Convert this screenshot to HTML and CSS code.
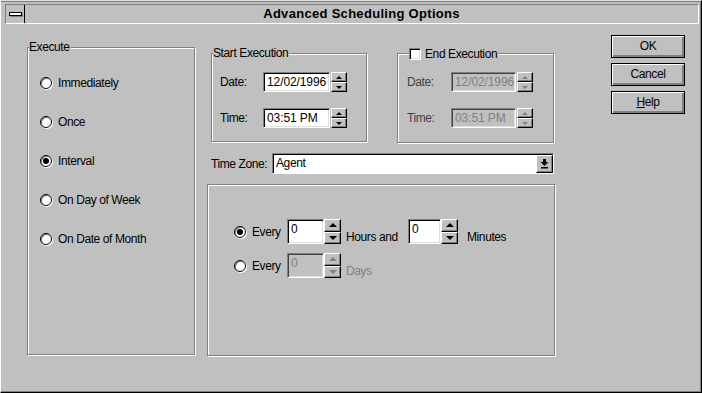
FILE: index.html
```html
<!DOCTYPE html>
<html lang="en">
<head>
  <meta charset="UTF-8" />
  <title>Advanced Scheduling Options</title>
  <link rel="stylesheet" href="styles.css">
</head>
<body>
  <div class="window">
    <div class="titlebar">
      <div class="sysmenu"><span class="sysmenu-bar"></span></div>
      <div class="title">Advanced Scheduling Options</div>
    </div>

    <div class="dialog-body">
      <!-- Execute options -->
      <div class="group execute-group">
        <span class="group-label">Execute</span>
        <div class="radio-list">
          <div class="radio-row"><span class="radio"></span>Immediately</div>
          <div class="radio-row"><span class="radio"></span>Once</div>
          <div class="radio-row"><span class="radio checked"></span>Interval</div>
          <div class="radio-row"><span class="radio"></span>On Day of Week</div>
          <div class="radio-row"><span class="radio"></span>On Date of Month</div>
        </div>
      </div>

      <div class="middle">
        <div class="top-row">
          <div class="group start-group">
            <span class="group-label">Start Execution</span>
            <div class="field-row">
              <span class="field-label">Date:</span>
              <div class="textbox date-box">12/02/1996</div>
              <div class="spinner">
                <div class="spin-btn"><span class="arrow-up"></span></div>
                <div class="spin-btn"><span class="arrow-down"></span></div>
              </div>
            </div>
            <div class="field-row">
              <span class="field-label">Time:</span>
              <div class="textbox date-box">03:51 PM</div>
              <div class="spinner">
                <div class="spin-btn"><span class="arrow-up"></span></div>
                <div class="spin-btn"><span class="arrow-down"></span></div>
              </div>
            </div>
          </div>

          <div class="group end-group">
            <span class="group-label check-label"><span class="checkbox"></span>End Execution</span>
            <div class="field-row">
              <span class="field-label">Date:</span>
              <div class="textbox date-box end-box disabled">12/02/1996</div>
              <div class="spinner disabled">
                <div class="spin-btn"><span class="arrow-up"></span></div>
                <div class="spin-btn"><span class="arrow-down"></span></div>
              </div>
            </div>
            <div class="field-row">
              <span class="field-label">Time:</span>
              <div class="textbox date-box end-box disabled">03:51 PM</div>
              <div class="spinner disabled">
                <div class="spin-btn"><span class="arrow-up"></span></div>
                <div class="spin-btn"><span class="arrow-down"></span></div>
              </div>
            </div>
          </div>
        </div>

        <div class="tz-row">
          <span class="tz-label">Time Zone:</span>
          <div class="combo">
            <div class="combo-text">Agent</div>
            <div class="combo-btn">
              <svg width="9" height="10" viewBox="0 0 9 10">
                <rect x="3" y="0" width="3" height="3" fill="#000"/>
                <polygon points="0.5,3 8.5,3 4.5,7" fill="#000"/>
                <rect x="1" y="8" width="7" height="1.5" fill="#000"/>
              </svg>
            </div>
          </div>
        </div>

        <div class="group interval-group">
          <div class="interval-row">
            <span class="radio checked"></span>
            <span class="every-label">Every</span>
            <div class="textbox num-box">0</div>
            <div class="spinner big">
              <div class="spin-btn"><span class="arrow-up"></span></div>
              <div class="spin-btn"><span class="arrow-down"></span></div>
            </div>
            <span class="unit hours-unit">Hours and</span>
            <div class="textbox num-box narrow">0</div>
            <div class="spinner big">
              <div class="spin-btn"><span class="arrow-up"></span></div>
              <div class="spin-btn"><span class="arrow-down"></span></div>
            </div>
            <span class="unit minutes-unit">Minutes</span>
          </div>
          <div class="interval-row">
            <span class="radio"></span>
            <span class="every-label">Every</span>
            <div class="textbox num-box disabled">0</div>
            <div class="spinner big disabled">
              <div class="spin-btn"><span class="arrow-up"></span></div>
              <div class="spin-btn"><span class="arrow-down"></span></div>
            </div>
            <span class="unit hours-unit disabled-text">Days</span>
          </div>
        </div>
      </div>

      <div class="buttons">
        <div class="button">OK</div>
        <div class="button">Cancel</div>
        <div class="button"><span><u>H</u>elp</span></div>
      </div>
    </div>
  </div>
</body>
</html>
```

FILE: styles.css
```css
* {
  box-sizing: border-box;
}

body {
  margin: 0;
  font-family: 'Liberation Sans', Arial, sans-serif;
  font-size: 12px;
  letter-spacing: -0.4px;
  color: #000;
  background: #c0c0c0;
}

.window {
  width: 702px;
  height: 393px;
  background: #c0c0c0;
  border: 1px solid;
  border-color: #dfdfdf #000 #000 #fff;
  box-shadow: inset -1px -1px #808080, inset 0 1px #808080;
}

/* title bar */
.titlebar {
  display: flex;
  height: 20px;
  margin: 3px 2px 0 4px;
  border: 1px solid;
  border-color: #808080 #fff #fff #808080;
}

.sysmenu {
  width: 19px;
  border-right: 1px solid #000;
  display: flex;
  align-items: center;
  justify-content: center;
}

.sysmenu-bar {
  width: 13px;
  height: 4px;
  background: #fff;
  border: 1px solid #000;
  box-shadow: 1px 1px #808080;
}

.title {
  flex: 1;
  text-align: center;
  font-weight: bold;
  font-size: 13px;
  letter-spacing: 0.3px;
  line-height: 18px;
}

/* body layout */
.dialog-body {
  display: flex;
  align-items: flex-start;
  padding-left: 26px;
}

.group {
  position: relative;
  border: 1px solid #808080;
  box-shadow: inset 1px 1px #fff, 1px 1px #fff;
}

.group-label {
  position: absolute;
  top: -8px;
  left: 1px;
  padding-right: 1px;
  line-height: 14px;
  background: #c0c0c0;
}

.execute-group {
  width: 168px;
  height: 308px;
  margin-top: 23px;
  padding: 25px 0 0 12px;
}

.radio-list {
  display: flex;
  flex-direction: column;
  gap: 19px;
}

.radio-row {
  display: flex;
  align-items: center;
  height: 20px;
  gap: 6px;
}

.radio {
  position: relative;
  width: 12px;
  height: 12px;
  flex: none;
  border-radius: 50%;
  background: #fff;
  border: 1px solid #000;
  box-shadow: 1px 1px 0 #fff, inset 1px 1px #808080;
}

.radio.checked::after {
  content: '';
  position: absolute;
  left: 2px;
  top: 2px;
  width: 6px;
  height: 6px;
  border-radius: 50%;
  background: #000;
}

.middle {
  margin-left: 12px;
  width: 348px;
  display: flex;
  flex-direction: column;
}

.top-row {
  display: flex;
  align-items: flex-start;
  height: 90px;
  margin-top: 29px;
}

.start-group {
  margin-left: 4px;
  width: 156px;
  height: 89px;
  padding: 18px 0 0 8px;
}

.end-group {
  margin-left: 30px;
  width: 157px;
  height: 90px;
  padding: 18px 0 0 9px;
}

.check-label {
  left: 11px;
  display: flex;
  align-items: center;
  gap: 4px;
  top: -7px;
}

.checkbox {
  width: 12px;
  height: 12px;
  background: #fff;
  border: 1px solid;
  border-color: #808080 #fff #fff #808080;
  box-shadow: inset 1px 1px #000, inset -1px -1px #dfdfdf;
}

.field-row {
  display: flex;
  align-items: center;
  height: 20px;
}

.field-row + .field-row {
  margin-top: 16px;
}

.field-label {
  width: 43px;
}

.end-group .field-label {
  width: 44px;
  color: #404040;
}

/* text boxes */
.textbox {
  background: #fff;
  border: 1px solid;
  border-color: #808080 #fff #fff #808080;
  box-shadow: inset 1px 1px #000, inset -1px -1px #dfdfdf;
  padding: 2px 0 0 3px;
  line-height: 14px;
  letter-spacing: -0.1px;
  font-size: 12px;
  overflow: hidden;
}

.date-box {
  width: 67px;
  height: 20px;
  white-space: nowrap;
}

.end-box {
  width: 65px;
}

.textbox.disabled {
  background: #c0c0c0;
  color: #808080;
  box-shadow: inset 1px 1px #404040, inset -1px -1px #dfdfdf;
}

/* spinners */
.spinner {
  display: flex;
  flex-direction: column;
  width: 16px;
  height: 20px;
  margin-left: 1px;
}

.spinner.big {
  width: 17px;
  height: 25px;
  margin-left: 0;
}

.spin-btn {
  flex: 1;
  display: flex;
  align-items: center;
  justify-content: center;
  background: #c0c0c0;
  border: 1px solid;
  border-color: #fff #000 #000 #fff;
  box-shadow: inset -1px -1px #808080;
}

.arrow-up,
.arrow-down {
  width: 0;
  height: 0;
  border-left: 3px solid transparent;
  border-right: 3px solid transparent;
}

.arrow-up {
  border-bottom: 3px solid #000;
}

.arrow-down {
  border-top: 3px solid #000;
}

.big .arrow-up {
  border-left-width: 4px;
  border-right-width: 4px;
  border-bottom-width: 4px;
}

.big .arrow-down {
  border-left-width: 4px;
  border-right-width: 4px;
  border-top-width: 4px;
}

.spinner.disabled .arrow-up {
  border-bottom-color: #808080;
}

.spinner.disabled .arrow-down {
  border-top-color: #808080;
}

/* time zone */
.tz-row {
  display: flex;
  align-items: center;
  height: 21px;
  margin-top: 10px;
  padding-left: 4px;
}

.tz-label {
  width: 61px;
}

.combo {
  display: flex;
  width: 282px;
  height: 21px;
  background: #fff;
  border: 1px solid;
  border-color: #808080 #fff #fff #808080;
  box-shadow: inset 1px 1px #000;
}

.combo-text {
  flex: 1;
  padding: 2px 0 0 3px;
  line-height: 14px;
}

.combo-btn {
  width: 17px;
  margin: 1px 0 0 0;
  display: flex;
  align-items: center;
  justify-content: center;
  background: #c0c0c0;
  border: 1px solid;
  border-color: #fff #000 #000 #fff;
  box-shadow: inset -1px -1px #808080;
}

/* interval */
.interval-group {
  margin-top: 10px;
  height: 172px;
  padding: 34px 0 0 26px;
}

.interval-row {
  display: flex;
  align-items: center;
  height: 25px;
}

.interval-row + .interval-row {
  margin-top: 9px;
}

.every-label {
  width: 35px;
  margin-left: 6px;
}

.num-box {
  width: 37px;
  height: 25px;
}

.num-box.narrow {
  width: 33px;
}

.unit {
  align-self: flex-end;
  line-height: 14px;
}

.hours-unit {
  width: 62px;
  margin-left: 5px;
}

.minutes-unit {
  margin-left: 9px;
}

.disabled-text {
  color: #808080;
}

/* buttons */
.buttons {
  display: flex;
  flex-direction: column;
  gap: 5px;
  margin: 11px 0 0 56px;
}

.button {
  width: 74px;
  height: 23px;
  display: flex;
  align-items: center;
  justify-content: center;
  border: 1px solid #000;
  box-shadow: inset 1px 1px #fff, inset -2px -2px #808080;
  padding-bottom: 1px;
}
```
